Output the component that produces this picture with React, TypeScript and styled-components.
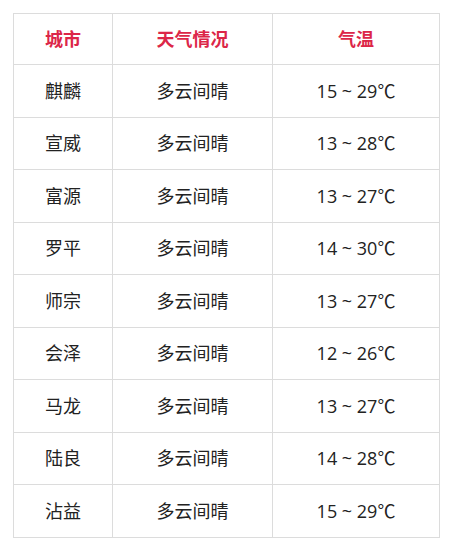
import styled, { createGlobalStyle } from "styled-components";

const GlobalStyle = createGlobalStyle`
  body {
    margin: 0;
    background: #fff;
    font-family: "Open Sans", "Noto Sans CJK SC", sans-serif;
  }
`

interface Row {
  city: string
  weather: string
  temp: string
}

const rows: Row[] = [
  { city: "麒麟", weather: "多云间晴", temp: "15 ~ 29℃" },
  { city: "宣威", weather: "多云间晴", temp: "13 ~ 28℃" },
  { city: "富源", weather: "多云间晴", temp: "13 ~ 27℃" },
  { city: "罗平", weather: "多云间晴", temp: "14 ~ 30℃" },
  { city: "师宗", weather: "多云间晴", temp: "13 ~ 27℃" },
  { city: "会泽", weather: "多云间晴", temp: "12 ~ 26℃" },
  { city: "马龙", weather: "多云间晴", temp: "13 ~ 27℃" },
  { city: "陆良", weather: "多云间晴", temp: "14 ~ 28℃" },
  { city: "沾益", weather: "多云间晴", temp: "15 ~ 29℃" },
]

function App() {
  return (
    <>
      <GlobalStyle />
      <Page>
        <Table>
          <colgroup>
            <col style={{ width: 99 }} />
            <col style={{ width: 160 }} />
            <col style={{ width: 167 }} />
          </colgroup>
          <thead>
            <tr>
              <Th>城市</Th>
              <Th>天气情况</Th>
              <Th>气温</Th>
            </tr>
          </thead>
          <tbody>
            {rows.map((r, i) => (
              <tr key={i}>
                <Td>{r.city}</Td>
                <Td>{r.weather}</Td>
                <Td>{r.temp}</Td>
              </tr>
            ))}
          </tbody>
        </Table>
      </Page>
    </>
  )
}
export default App;

const Page = styled.div`
  padding: 13px 0 0 13px;
`

const Table = styled.table`
  border-collapse: collapse;
  table-layout: fixed;
  width: 427px;
`

const Th = styled.th`
  height: 50px;
  padding: 0;
  border: 1px solid #dcdcdc;
  color: #dc2648;
  font-size: 18px;
  line-height: 24px;
  font-weight: 700;
  text-align: center;
  vertical-align: middle;
`

const Td = styled.td`
  height: 51.5px;
  padding: 0;
  border: 1px solid #dcdcdc;
  color: #222;
  font-size: 18px;
  line-height: 24px;
  text-align: center;
  vertical-align: middle;
`
